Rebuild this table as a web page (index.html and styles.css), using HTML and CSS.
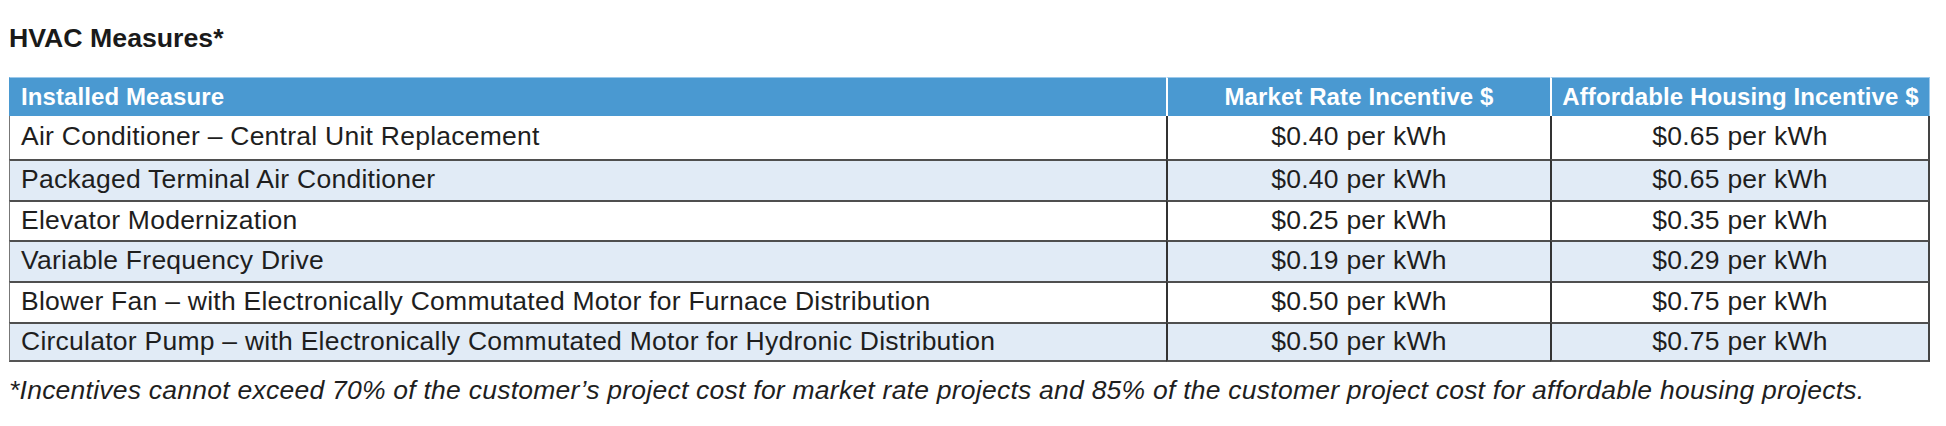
FILE: index.html
```html
<!DOCTYPE html>
<html lang="en">
<head>
<meta charset="utf-8">
<title>HVAC Measures</title>
<link rel="stylesheet" href="styles.css">
</head>
<body>
<div class="page">
  <h1 class="title">HVAC Measures*</h1>
  <table class="measures">
    <colgroup>
      <col class="col-measure">
      <col class="col-market">
      <col class="col-afford">
    </colgroup>
    <thead>
      <tr>
        <th class="th-left">Installed Measure</th>
        <th>Market Rate Incentive $</th>
        <th class="th-last">Affordable Housing Incentive $</th>
      </tr>
    </thead>
    <tbody>
      <tr class="row-first">
        <td class="name">Air Conditioner – Central Unit Replacement</td>
        <td>$0.40 per kWh</td>
        <td>$0.65 per kWh</td>
      </tr>
      <tr class="alt">
        <td class="name">Packaged Terminal Air Conditioner</td>
        <td>$0.40 per kWh</td>
        <td>$0.65 per kWh</td>
      </tr>
      <tr>
        <td class="name">Elevator Modernization</td>
        <td>$0.25 per kWh</td>
        <td>$0.35 per kWh</td>
      </tr>
      <tr class="alt">
        <td class="name">Variable Frequency Drive</td>
        <td>$0.19 per kWh</td>
        <td>$0.29 per kWh</td>
      </tr>
      <tr>
        <td class="name">Blower Fan – with Electronically Commutated Motor for Furnace Distribution</td>
        <td>$0.50 per kWh</td>
        <td>$0.75 per kWh</td>
      </tr>
      <tr class="alt row-last">
        <td class="name">Circulator Pump – with Electronically Commutated Motor for Hydronic Distribution</td>
        <td>$0.50 per kWh</td>
        <td>$0.75 per kWh</td>
      </tr>
    </tbody>
  </table>
  <p class="note">*Incentives cannot exceed 70% of the customer’s project cost for market rate projects and 85% of the customer project cost for affordable housing projects.</p>
</div>
</body>
</html>
```

FILE: styles.css
```css
html, body {
  margin: 0;
  padding: 0;
  background: #ffffff;
}

.page {
  padding: 23px 0 0 9px;
  font-family: "Liberation Sans", Arial, Helvetica, sans-serif;
  color: #1e1e1e;
}

.title {
  margin: 0;
  font-size: 26.7px;
  line-height: 30px;
  font-weight: bold;
  color: #1a1a1a;
}

.measures {
  margin-top: 24px;
  width: 1921px;
  table-layout: fixed;
  border-collapse: separate;
  border-spacing: 0;
}

.col-measure { width: 1157px; }
.col-market { width: 384px; }
.col-afford { width: 380px; }

.measures th {
  box-sizing: border-box;
  height: 39px;
  padding: 0 2px 1px;
  background: #4a99d1;
  color: #ffffff;
  font-size: 24px;
  letter-spacing: 0.1px;
  font-weight: bold;
  text-align: center;
  vertical-align: middle;
  white-space: nowrap;
  border-top: 1px solid #9cc9eb;
  border-left: 2px solid #ffffff;
}

.measures th.th-left {
  text-align: left;
  padding-left: 11px;
  border-left: 1px solid #4a99d1;
}

.measures th.th-last {
  border-right: 1px solid #9cc9eb;
}

.measures td {
  box-sizing: border-box;
  height: 40.7px;
  padding: 0 4px 2px;
  font-size: 26.5px;
  letter-spacing: 0.25px;
  text-align: center;
  vertical-align: middle;
  white-space: nowrap;
  border-top: 2px solid #4f4f4f;
  border-left: 2px solid #333333;
}

.measures td:last-child {
  border-right: 2px solid #444444;
}

.measures td.name {
  text-align: left;
  padding-left: 11px;
  border-left: 1px solid #777777;
}

.measures tr.row-first td {
  border-top: 0;
  height: 43px;
}

.measures tr.alt td {
  background: #e1ebf6;
}

.measures tr.row-last td {
  border-bottom: 2px solid #555555;
}

.note {
  margin: 13px 0 0;
  font-size: 26.5px;
  line-height: 30px;
  letter-spacing: 0.24px;
  font-style: italic;
  color: #1e1e1e;
}
```
